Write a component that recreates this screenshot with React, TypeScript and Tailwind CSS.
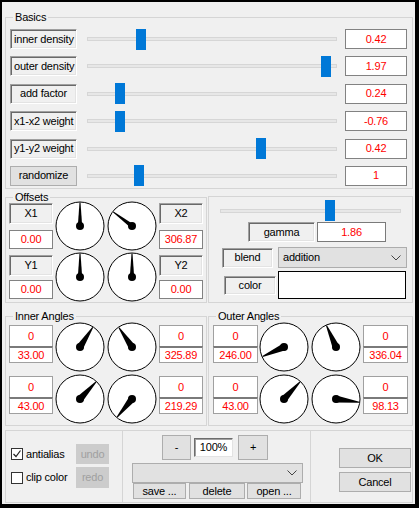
import React from "react";

const sunken =
  "bg-[#f0f0f0] border border-t-[#a0a0a0] border-l-[#a0a0a0] border-b-white border-r-white shadow-[inset_1px_1px_0_#696969,inset_-1px_-1px_0_#e3e3e3] flex items-center leading-none";
const valueBox =
  "bg-white border border-[#828282] text-[#ff0000] flex items-center justify-center leading-none";
const btn =
  "bg-[#e1e1e1] border border-[#adadad] flex items-center justify-center leading-none text-black";

function Group({
  title,
  className,
  children,
}: {
  title?: string;
  className?: string;
  children?: React.ReactNode;
}) {
  return (
    <fieldset className={"border border-[#d5d5d5] " + (className || "")}>
      {title && (
        <legend className="ml-[7px] px-[2px] text-[11px] leading-[12px]">{title}</legend>
      )}
      {children}
    </fieldset>
  );
}

function Dial({ a, base = 3.5 }: { a: number; base?: number }) {
  const r = (a * Math.PI) / 180;
  const cx = 25,
    cy = 25,
    L = 23.5,
    tip = 0.5;
  const dx = Math.sin(r),
    dy = -Math.cos(r);
  const px = Math.cos(r),
    py = Math.sin(r);
  const pts = [
    [cx + px * base, cy + py * base],
    [cx + dx * L + px * tip, cy + dy * L + py * tip],
    [cx + dx * L - px * tip, cy + dy * L - py * tip],
    [cx - px * base, cy - py * base],
  ]
    .map((p) => p[0].toFixed(2) + "," + p[1].toFixed(2))
    .join(" ");
  return (
    <svg width="50" height="50" viewBox="0 0 50 50" className="block">
      <circle cx="25" cy="25" r="24" fill="white" stroke="black" strokeWidth="1" />
      <polygon points={pts} fill="black" />
      <circle cx="25" cy="25" r="4" fill="black" />
    </svg>
  );
}

function SliderRow({
  label,
  value,
  pos,
  center,
  button,
}: {
  label: string;
  value: string;
  pos: number;
  center?: boolean;
  button?: boolean;
}) {
  return (
    <div className="flex items-center h-[20px]">
      {button ? (
        <div className={btn + " w-[67px] h-[20px]"}>{label}</div>
      ) : (
        <div
          className={
            sunken +
            " w-[67px] h-[20px] " +
            (center ? "justify-center" : "justify-start pl-[3px]")
          }
        >
          {label}
        </div>
      )}
      <div className="ml-[10px] relative w-[250px] h-[21px] flex items-center">
        <div className="w-full h-[4px] bg-[#e7e7e7] border border-[#d6d6d6]" />
        <div className="absolute top-0 w-[10px] h-[21px] bg-[#0078d7]" style={{ left: pos }} />
      </div>
      <div className={valueBox + " ml-[8px] w-[62px] h-[20px]"}>{value}</div>
    </div>
  );
}

function LabelVal({ label, value }: { label: string; value: string }) {
  return (
    <>
      <div className={sunken + " justify-center h-[21px]"}>{label}</div>
      <div className={valueBox + " mt-[6px] h-[19px]"}>{value}</div>
    </>
  );
}

function AnglePair({ top, bottom }: { top: string; bottom: string }) {
  return (
    <>
      <div className="bg-white border border-[#a0a0a0] border-b-0 h-[21px] flex items-center justify-center leading-none text-[#ff0000]">
        {top}
      </div>
      <div className="bg-white border border-[#a0a0a0] border-t-2 border-t-[#7a7a7a] h-[17px] flex items-center justify-center leading-none text-[#ff0000]">
        {bottom}
      </div>
    </>
  );
}

function AngleGroup({
  title,
  left,
  right,
  dials,
  wide,
}: {
  title: string;
  left: [string, string][];
  right: [string, string][];
  dials: number[];
  wide?: boolean;
}) {
  const colW = wide ? "w-[45px]" : "w-[44px]";
  return (
    <div className={"flex " + (wide ? "pl-[4px]" : "pl-[3px]")}>
      <div className={colW + " flex flex-col pt-[3px]"}>
        <AnglePair top={left[0][0]} bottom={left[0][1]} />
        <div className="h-[13px]" />
        <AnglePair top={left[1][0]} bottom={left[1][1]} />
      </div>
      <div className={"grid grid-cols-2 gap-x-[2px] gap-y-[2px] " + (wide ? "ml-[1px]" : "ml-[2px]")}>
        {dials.map((d, i) => (
          <Dial key={i} a={d} />
        ))}
      </div>
      <div className={colW + " flex flex-col pt-[3px] ml-[2px]"}>
        <AnglePair top={right[0][0]} bottom={right[0][1]} />
        <div className="h-[13px]" />
        <AnglePair top={right[1][0]} bottom={right[1][1]} />
      </div>
    </div>
  );
}

function Chevron() {
  return (
    <svg width="10" height="6" viewBox="0 0 10 6" className="block">
      <polyline points="0.5,0.5 5,5 9.5,0.5" fill="none" stroke="#444" strokeWidth="1" />
    </svg>
  );
}

function Checkbox({ checked }: { checked?: boolean }) {
  return (
    <div className="w-[12px] h-[12px] bg-white border border-[#333] flex items-center justify-center">
      {checked && (
        <svg width="10" height="10" viewBox="0 0 10 10" className="block">
          <polyline points="1.5,5 4,7.5 8.5,1.5" fill="none" stroke="#222" strokeWidth="1.2" />
        </svg>
      )}
    </div>
  );
}

export default function App() {
  return (
    <div className="w-[419px] h-[508px] border-t-2 border-l-2 border-r-4 border-b-4 border-black bg-[#f0f0f0] text-[11px] tracking-[-0.2px] text-black font-['Liberation_Sans',Arial,sans-serif] overflow-hidden">
      <div className="pl-[3px] pr-[2px] pt-[9px] flex flex-col">
        {/* Basics */}
        <Group title="Basics" className="h-[178px]">
          <div className="flex flex-col gap-[7.4px] pl-[4px] pt-[6px]">
            <SliderRow label="inner density" value="0.42" pos={49} />
            <SliderRow label="outer density" value="1.97" pos={234} />
            <SliderRow label="add factor" value="0.24" pos={28} center />
            <SliderRow label="x1-x2 weight" value="-0.76" pos={28} />
            <SliderRow label="y1-y2 weight" value="0.42" pos={169} />
            <SliderRow label="randomize" value="1" pos={47} button />
          </div>
        </Group>

        {/* Offsets + gamma */}
        <div className="flex mt-[2px]">
          <Group title="Offsets" className="w-[202px] h-[112px]">
            <div className="flex pl-[3px]">
              <div className="w-[44px] flex flex-col">
                <LabelVal label="X1" value="0.00" />
                <div className="h-[6px]" />
                <div className={sunken + " justify-center h-[21px]"}>Y1</div>
                <div className={valueBox + " mt-[4px] h-[19px]"}>0.00</div>
              </div>
              <div className="grid grid-cols-2 gap-x-[2px] gap-y-[1px] ml-[2px] -mt-[2px]">
                <Dial a={0} base={2.2} />
                <Dial a={306.87} base={2.2} />
                <Dial a={0} base={2.2} />
                <Dial a={0} base={2.2} />
              </div>
              <div className="w-[44px] flex flex-col ml-[2px]">
                <LabelVal label="X2" value="306.87" />
                <div className="h-[6px]" />
                <div className={sunken + " justify-center h-[21px]"}>Y2</div>
                <div className={valueBox + " mt-[4px] h-[19px]"}>0.00</div>
              </div>
            </div>
          </Group>
          <Group className="w-[205px] h-[107px] mt-[5px] ml-[1px]">
            <div className="flex flex-col">
              <div className="ml-[11px] mt-[3px] relative w-[181px] h-[21px] flex items-center">
                <div className="w-full h-[4px] bg-[#e7e7e7] border border-[#d6d6d6]" />
                <div className="absolute top-0 w-[10px] h-[21px] bg-[#0078d7]" style={{ left: 105 }} />
              </div>
              <div className="flex mt-[1px] h-[20px]">
                <div className={sunken + " justify-center ml-[39px] w-[67px] h-[20px]"}>gamma</div>
                <div className="ml-[2px] w-[69px] h-[20px] bg-white border border-[#7a7a7a] text-[#ff0000] flex items-center justify-center leading-none">
                  1.86
                </div>
              </div>
              <div className="flex items-center mt-[5px]">
                <div className={sunken + " justify-center ml-[13px] w-[51px] h-[20px]"}>blend</div>
                <div className={btn + " ml-[5px] w-[129px] h-[21px] !justify-between pl-[4px] pr-[5px]"}>
                  <span>addition</span>
                  <Chevron />
                </div>
              </div>
              <div className="flex items-center mt-[3px]">
                <div className={sunken + " justify-center ml-[15px] w-[52px] h-[19px]"}>color</div>
                <div className="ml-[2px] w-[128px] h-[28px] bg-white border border-black" />
              </div>
            </div>
          </Group>
        </div>

        {/* Angles */}
        <div className="flex mt-[7px]">
          <Group title="Inner Angles" className="w-[202px] h-[116px]">
            <AngleGroup
              title="Inner Angles"
              left={[
                ["0", "33.00"],
                ["0", "43.00"],
              ]}
              right={[
                ["0", "325.89"],
                ["0", "219.29"],
              ]}
              dials={[33, 325.89, 43, 219.29]}
            />
          </Group>
          <Group title="Outer Angles" className="w-[205px] h-[116px] ml-[1px]">
            <AngleGroup
              title="Outer Angles"
              left={[
                ["0", "246.00"],
                ["0", "43.00"],
              ]}
              right={[
                ["0", "336.04"],
                ["0", "98.13"],
              ]}
              dials={[246, 336.04, 43, 98.13]}
              wide
            />
          </Group>
        </div>

        {/* Bottom */}
        <div className="flex mt-[4px] h-[73px] border border-[#d5d5d5]">
          <div className="w-[116px] flex flex-col pt-[13px]">
            <div className="flex items-center h-[20px]">
              <div className="w-[70px] flex items-center pl-[5px]">
                <Checkbox checked />
                <span className="ml-[3px]">antialias</span>
              </div>
              <div className="w-[33px] h-[20px] bg-[#cccccc] text-[#a0a0a0] flex items-center justify-center leading-none">
                undo
              </div>
            </div>
            <div className="flex items-center h-[21px] mt-[3px]">
              <div className="w-[70px] flex items-center pl-[5px]">
                <Checkbox />
                <span className="ml-[3px]">clip color</span>
              </div>
              <div className="w-[33px] h-[21px] bg-[#cccccc] text-[#a0a0a0] flex items-center justify-center leading-none">
                redo
              </div>
            </div>
          </div>
          <div className="w-[188px] border-l border-[#d5d5d5] flex flex-col pt-[4px]">
            <div className="flex items-center">
              <div className={btn + " ml-[39px] w-[29px] h-[25px]"}>-</div>
              <div className="ml-[3px] w-[39px] h-[19px] bg-white border border-t-[#6d6d6d] border-l-[#6d6d6d] border-b-[#e3e3e3] border-r-[#e3e3e3] shadow-[inset_1px_1px_0_#a0a0a0] flex items-center justify-center leading-none">
                100%
              </div>
              <div className={btn + " ml-[5px] w-[30px] h-[25px]"}>+</div>
            </div>
            <div className={btn + " mt-[3px] ml-[9px] w-[171px] h-[20px] !justify-end pr-[5px]"}>
              <Chevron />
            </div>
            <div className="flex">
              <div className={btn + " ml-[10px] w-[53px] h-[16px]"}>save ...</div>
              <div className={btn + " ml-[3px] w-[56px] h-[16px]"}>delete</div>
              <div className={btn + " ml-[2px] w-[54px] h-[16px]"}>open ...</div>
            </div>
          </div>
          <div className="flex-1 border-l border-[#d5d5d5] flex flex-col pt-[17px]">
            <div className={btn + " ml-[28px] w-[72px] h-[20px]"}>OK</div>
            <div className={btn + " ml-[28px] mt-[4px] w-[72px] h-[20px]"}>Cancel</div>
          </div>
        </div>
      </div>
    </div>
  );
}
